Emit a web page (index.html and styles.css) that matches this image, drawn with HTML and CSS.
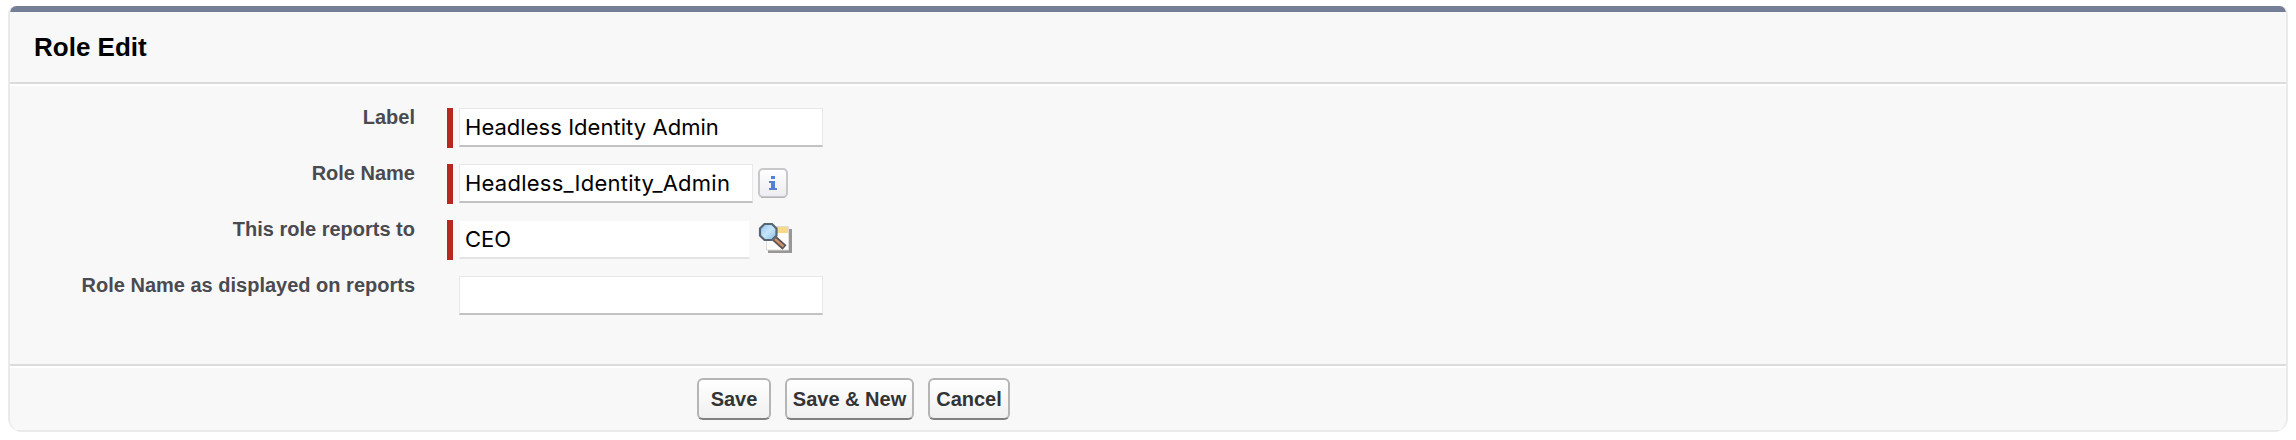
FILE: index.html
```html
<!DOCTYPE html>
<html lang="en">
<head>
<meta charset="utf-8">
<title>Role Edit</title>
<link rel="stylesheet" href="styles.css">
</head>
<body>
<form class="panel">
  <header class="panel-header"><h2>Role Edit</h2></header>
  <div class="fields">
    <div class="row">
      <label class="name" for="label">Label</label>
      <span class="required"></span>
      <input class="field wide" id="label" type="text" value="Headless Identity Admin">
    </div>
    <div class="row">
      <label class="name" for="role-name">Role Name</label>
      <span class="required"></span>
      <input class="field short" id="role-name" type="text" value="Headless_Identity_Admin">
      <svg class="info" viewBox="0 0 32 32" width="32" height="32">
        <defs><linearGradient id="face" x1="0" y1="0" x2="0" y2="1"><stop offset="0" stop-color="#fff"/><stop offset="1" stop-color="#ececf2"/></linearGradient></defs>
        <rect x="2" y="2" width="28" height="28" rx="4" fill="url(#face)" stroke="#c8c8ca" stroke-width="2"/>
        <path d="M4 30.500h24" stroke="#b4b4b7" stroke-width="1"/>
        <path d="M14 9h4v3h-4zM12 14h6v7h2v2h-8v-2h2v-5h-2z" fill="#5580d6"/>
      </svg>
    </div>
    <div class="row">
      <label class="name" for="parent">This role reports to</label>
      <span class="required"></span>
      <input class="field lookup" id="parent" type="text" value="CEO">
      <svg class="search" viewBox="0 0 36 34" width="36" height="34">
        <defs><linearGradient id="glass" x1="0" y1="0" x2="1" y2="1"><stop offset="0" stop-color="#8fc3ee"/><stop offset=".5" stop-color="#c5e5fa"/><stop offset="1" stop-color="#86b9e2"/></linearGradient></defs>
        <path d="M11 8h24v24H11z" fill="#979797"/>
        <path d="M9.500 5.500h22v23.500h-22z" fill="#fff" stroke="#dedcd4"/>
        <path d="M18 6h13v6H18z" fill="#f8d98a"/>
        <path d="M17.500 17.500l10 9" stroke="#5b5253" stroke-width="6"/>
        <path d="M18 18l8.500 7.500" stroke="#c98f68" stroke-width="2.500"/>
        <path d="M7.500 3h7.500l4.500 4.500v7L15 19H7.500L3 14.500v-7z" fill="url(#glass)" stroke="#586673" stroke-width="2.200"/>
      </svg>
    </div>
    <div class="row">
      <label class="name" for="report-name">Role Name as displayed on reports</label>
      <span class="required none"></span>
      <input class="field wide" id="report-name" type="text" value="">
    </div>
  </div>
  <footer class="actions">
    <button class="btn save" type="button">Save</button>
    <button class="btn save-new" type="button">Save &amp; New</button>
    <button class="btn cancel" type="button">Cancel</button>
  </footer>
</form>
</body>
</html>
```
FILE: styles.css
```css
* { box-sizing: border-box; }
body {
  margin: 0;
  padding: 6px 8px 0;
  background: #fff;
  font-family: "Liberation Sans", Arial, sans-serif;
}
.panel {
  width: 2280px;
  height: 426px;
  display: flex;
  flex-direction: column;
  background: linear-gradient(#747e96 6px, #f8f8f8 6px);
  border: 2px solid #eaeaea;
  border-width: 0 2px;
  border-radius: 8px 8px 14px 14px;
  overflow: hidden;
}
.panel-header {
  height: 78px;
  padding: 26px 0 0 24px;
  border-bottom: 2px solid #dbdbdb;
}
.panel-header h2 {
  margin: 0;
  font-size: 26px;
  line-height: 30px;
  color: #000;
}
.fields {
  height: 280px;
  padding-top: 24px;
  box-shadow: inset 0 2px #fff;
  display: flex;
  flex-direction: column;
  gap: 16px;
}
.row { display: flex; height: 40px; }
.name {
  width: 405px;
  margin-right: 32px;
  font-size: 20px;
  line-height: 18px;
  font-weight: bold;
  text-align: right;
  color: #4a4a50;
}
.required { width: 6px; height: 40px; margin-right: 6px; background: #b7291f; }
.none { background: none; }
.field {
  height: 39px;
  padding: 0 0 0 5px;
  border: 1px solid #e8e8e8;
  border-bottom: 2px solid #c2c2c2;
  background: #fff;
  font: 22px Inter, sans-serif;
  letter-spacing: .04px;
  color: #000;
}
.wide { width: 364px; }
.short { width: 294px; letter-spacing: .24px; }
.lookup { width: 291px; height: 39px; border-color: #f8f8f8; border-bottom-color: #e4e4e4; }
.info { margin: 3px 0 0 4px; }
.search { margin: 1px 0 0 7px; }
.actions {
  height: 68px;
  padding: 12px 0 0 687px;
  border-top: 2px solid #dbdbdb;
  box-shadow: inset 0 2px #fff, inset 0 -2px #eaeaea;
  display: flex;
  gap: 14px;
}
.btn {
  height: 42px;
  padding: 0;
  border: 2px solid #b5b5b5;
  border-bottom-color: #7f7f7f;
  border-radius: 6px;
  background: linear-gradient(#fff, #f0f0f0);
  font: bold 20px "Liberation Sans", Arial, sans-serif;
  color: #333;
}
.save { width: 74px; }
.save-new { width: 129px; }
.cancel { width: 82px; }
```
